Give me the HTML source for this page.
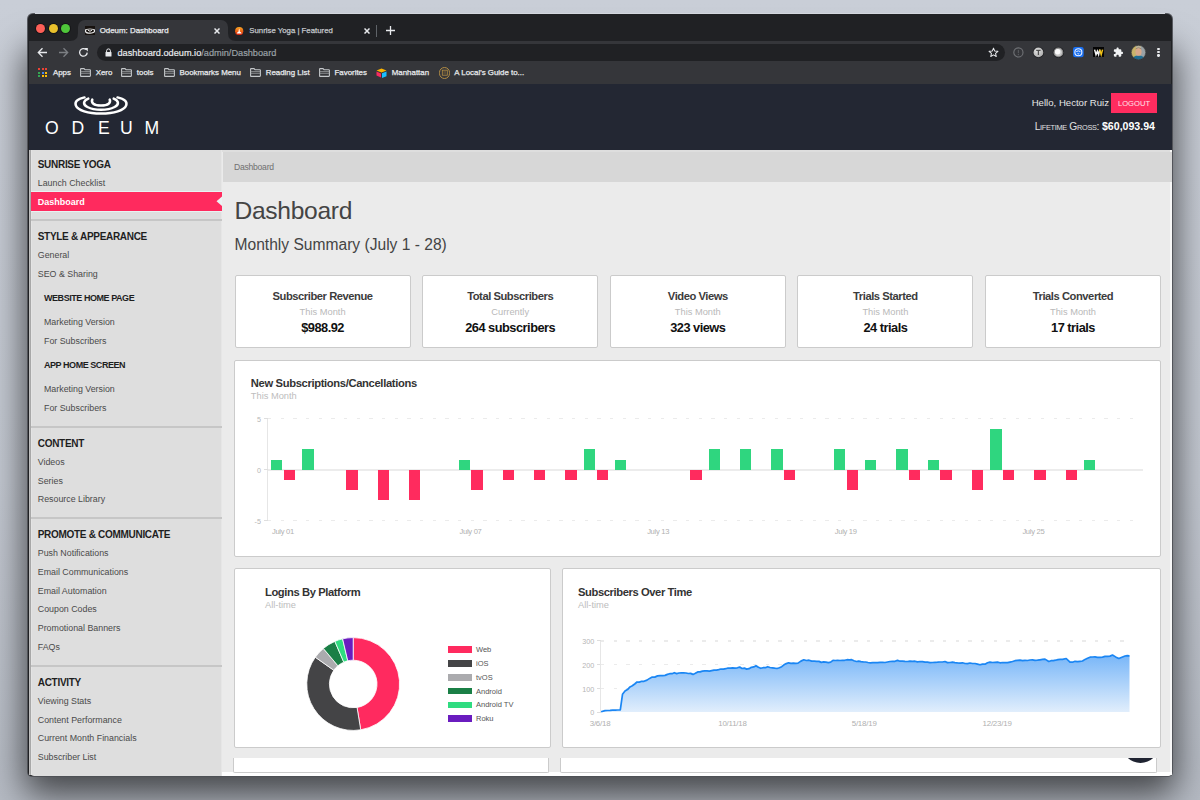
<!DOCTYPE html>
<html><head><meta charset="utf-8"><title>Odeum Dashboard</title>
<style>
html,body{margin:0;padding:0;width:1200px;height:800px;overflow:hidden;}
body{position:relative;font-family:"Liberation Sans", sans-serif;background:#c9cdd6;}
.t{position:absolute;white-space:nowrap;line-height:1;}
svg{position:absolute;}
</style></head><body>
<div style="position:absolute;left:0;top:0;width:1200px;height:800px;background:linear-gradient(180deg,#c9ced7 0%,#c3c8d1 60%,#b5bac3 100%);"></div>
<div style="position:absolute;left:30px;top:40px;width:1140px;height:735px;border-radius:8px;box-shadow:0 14px 34px 6px rgba(0,0,0,0.62);"></div>
<div style="position:absolute;left:28px;top:14px;width:1144px;height:762px;border-radius:5px 5px 4px 4px;background:#202124;box-shadow:0 0 0 1px rgba(78,80,86,0.92);"></div>
<div style="position:absolute;left:35px;top:13px;width:1130px;height:1px;background:#d3d7de;"></div>
<div style="position:absolute;left:36.3px;top:23.8px;width:9px;height:9px;border-radius:50%;background:#fd5f57;box-shadow:0 0 0 1px rgba(0,0,0,0.35);"></div>
<div style="position:absolute;left:48.8px;top:23.8px;width:9px;height:9px;border-radius:50%;background:#e9c02c;box-shadow:0 0 0 1px rgba(0,0,0,0.35);"></div>
<div style="position:absolute;left:61.3px;top:23.8px;width:9px;height:9px;border-radius:50%;background:#4fc63a;box-shadow:0 0 0 1px rgba(0,0,0,0.35);"></div>
<div style="position:absolute;left:78px;top:20px;width:150px;height:22px;background:#35363a;border-radius:7px 7px 0 0;"></div>
<svg style="left:70px;top:33px" width="8" height="8"><path d="M0 8 Q8 8 8 0 L8 8 Z" fill="#35363a"/></svg>
<svg style="left:228px;top:33px" width="8" height="8"><path d="M8 8 Q0 8 0 0 L0 8 Z" fill="#35363a"/></svg>
<svg style="left:85.2px;top:25.7px" width="10" height="9.6" viewBox="0 0 10 9.6"><rect width="10" height="9.6" fill="#17120f"/><ellipse cx="5" cy="4.9" rx="4.6" ry="2.3" stroke="#e8e8e8" stroke-width="1.2" fill="none"/><path d="M3 4.2 Q5 6.4 7 4.2" stroke="#e8e8e8" stroke-width="1" fill="none"/><rect x="0" y="0" width="10" height="3" fill="#17120f"/><path d="M0.9 3.6 Q5 1.6 9.1 3.6" stroke="#bdbdbd" stroke-width="0.6" fill="none"/></svg>
<div class="t" style="left:99.70px;top:27.41px;font-size:7.9px;color:#e8eaed;-webkit-text-stroke:0.25px currentColor;">Odeum: Dashboard</div>
<svg style="left:214.4px;top:27.6px" width="6" height="6"><path d="M0.5 0.5 L5.5 5.5 M5.5 0.5 L0.5 5.5" stroke="#e8eaed" stroke-width="1.5"/></svg>
<svg style="left:235.2px;top:26.6px" width="8.4" height="8.4" viewBox="0 0 8.4 8.4"><defs><linearGradient id="fv2" x1="0" y1="0" x2="0" y2="1"><stop offset="0" stop-color="#f9a825"/><stop offset="0.55" stop-color="#ee5d14"/><stop offset="1" stop-color="#c81a10"/></linearGradient></defs><circle cx="4.2" cy="4.2" r="4.1" fill="url(#fv2)"/><path d="M4.2 1.6 Q4.9 3.4 4.8 4.4 Q6.6 5.2 6.6 6.4 L1.8 6.4 Q1.8 5.2 3.6 4.4 Q3.5 3.4 4.2 1.6 Z" fill="#fff"/></svg>
<div class="t" style="left:249.30px;top:26.90px;font-size:7.8px;color:#c4c7cb;-webkit-text-stroke:0.25px currentColor;">Sunrise Yoga | Featured</div>
<svg style="left:363.7px;top:27.5px" width="6" height="6"><path d="M0.5 0.5 L5.5 5.5 M5.5 0.5 L0.5 5.5" stroke="#e8eaed" stroke-width="1.5"/></svg>
<div style="position:absolute;left:376px;top:24.7px;width:1px;height:12px;background:#5f6368;"></div>
<svg style="left:386px;top:26px" width="9" height="9"><path d="M4.5 0 V9 M0 4.5 H9" stroke="#e8eaed" stroke-width="1.3"/></svg>
<div style="position:absolute;left:29px;top:41px;width:1142px;height:43px;background:#35363a;"></div>
<svg style="left:37px;top:47px" width="11" height="11" viewBox="0 0 11 11"><path d="M10 5.5 H1.5 M5.5 1.3 L1.3 5.5 L5.5 9.7" stroke="#e8eaed" stroke-width="1.3" fill="none"/></svg>
<svg style="left:57.5px;top:47px" width="11" height="11" viewBox="0 0 11 11"><path d="M1 5.5 H9.5 M5.5 1.3 L9.7 5.5 L5.5 9.7" stroke="#7c7f83" stroke-width="1.3" fill="none"/></svg>
<svg style="left:77.5px;top:46.8px" width="11" height="11" viewBox="0 0 11 11"><path d="M9.2 5.6 A3.8 3.8 0 1 1 8 2.6" stroke="#e8eaed" stroke-width="1.3" fill="none"/><path d="M6.3 1 L9.8 1 L9.8 4.5 Z" fill="#e8eaed"/></svg>
<div style="position:absolute;left:96.7px;top:43.8px;width:908px;height:17.2px;background:#202124;border-radius:9px;"></div>
<svg style="left:104.5px;top:47.5px" width="7" height="9" viewBox="0 0 7 9"><path d="M1.6 4 V2.8 A1.9 1.9 0 0 1 5.4 2.8 V4" stroke="#e8eaed" stroke-width="1" fill="none"/><rect x="0.5" y="4" width="6" height="4.6" rx="0.6" fill="#e8eaed"/></svg>
<div class="t" style="left:117.50px;top:49.41px;font-size:9.2px;color:#e8eaed;-webkit-text-stroke:0.2px currentColor;">dashboard.odeum.io<span style="color:#9aa0a6">/admin/Dashboard</span></div>
<svg style="left:987.5px;top:46.6px" width="11" height="11" viewBox="0 0 24 24"><path d="M12 2.5 L14.8 8.9 L21.7 9.5 L16.5 14 L18 20.8 L12 17.3 L6 20.8 L7.5 14 L2.3 9.5 L9.2 8.9 Z" stroke="#e8eaed" stroke-width="2.2" fill="none" stroke-linejoin="round"/></svg>
<svg style="left:1012px;top:46.3px" width="13" height="13" viewBox="0 0 13 13"><circle cx="6.4" cy="6.45" r="4.6" stroke="#707276" stroke-width="1.1" fill="none"/><rect x="5.8" y="3.9" width="1.2" height="3.3" fill="#55575b"/><rect x="5.8" y="8" width="1.2" height="1.2" fill="#55575b"/></svg>
<svg style="left:1032px;top:46.1px" width="13" height="13" viewBox="0 0 13 13"><defs><radialGradient id="g2" cx="0.4" cy="0.35" r="0.7"><stop offset="0" stop-color="#e6e6e6"/><stop offset="1" stop-color="#a9a9a9"/></radialGradient></defs><circle cx="6.4" cy="6.4" r="5.6" fill="#1e1f22"/><circle cx="6.4" cy="6.4" r="4.9" fill="url(#g2)"/><path d="M4.2 4.3 H8.6 M6.4 4.3 V9" stroke="#505050" stroke-width="1.3"/></svg>
<svg style="left:1051.6px;top:46.1px" width="13" height="13" viewBox="0 0 13 13"><circle cx="6.4" cy="6.4" r="5.6" fill="#1e1f22"/><circle cx="6.4" cy="6.4" r="4.9" fill="#8e8e8e"/><circle cx="6.4" cy="6.4" r="3.6" fill="#c9c9c9"/><circle cx="5.7" cy="5.8" r="2.7" fill="#fafafa"/></svg>
<svg style="left:1073px;top:47px" width="11" height="10.5" viewBox="0 0 11 10.5"><rect x="0" y="0" width="10.7" height="10.3" rx="2.2" fill="#1a6ff0"/><circle cx="5.35" cy="5.2" r="3.5" stroke="#e9f1ff" stroke-width="1.1" fill="none"/><path d="M3.3 4.6 Q5.35 3.2 7.4 4.6 M4.5 6.4 Q5.35 7.4 6.2 6.4" stroke="#e9f1ff" stroke-width="1" fill="none"/></svg>
<svg style="left:1093px;top:47.3px" width="11" height="10" viewBox="0 0 11 10"><rect width="11" height="10" fill="#050505"/><path d="M1.6 2.6 L3 7.6 L4.4 4.2 L5.6 7.6 L6.8 2.6" stroke="#f4f4f4" stroke-width="1.5" fill="none"/><path d="M6.8 2.6 L8.2 7.6 L9.6 2.6" stroke="#f2c318" stroke-width="1.5" fill="none"/></svg>
<svg style="left:1113.4px;top:47.2px" width="10.5" height="10.5" viewBox="0 0 24 24"><path d="M20.5 11H19V7c0-1.1-.9-2-2-2h-4V3.5C13 2.12 11.88 1 10.5 1S8 2.12 8 3.5V5H4c-1.1 0-1.99.9-1.99 2v3.8H3.5c1.49 0 2.7 1.21 2.7 2.7s-1.21 2.7-2.7 2.7H2V20c0 1.1.9 2 2 2h3.8v-1.5c0-1.49 1.21-2.7 2.7-2.7 1.49 0 2.7 1.21 2.7 2.7V22H17c1.1 0 2-.9 2-2v-4h1.5c1.38 0 2.5-1.12 2.5-2.5S21.88 11 20.5 11z" fill="#f1f3f4"/></svg>
<svg style="left:1130.8px;top:44.8px" width="15" height="15" viewBox="0 0 15 15"><defs><clipPath id="av"><circle cx="7.5" cy="7.5" r="7.2"/></clipPath></defs><g clip-path="url(#av)"><rect width="15" height="15" fill="#b9b39a"/><rect x="0" y="0" width="5" height="15" fill="#c9b46a"/><rect x="10" y="0" width="5" height="15" fill="#9aa2a6"/><path d="M1 15 Q1.5 10.5 7.5 10.5 Q13.5 10.5 14 15 Z" fill="#1f6d93"/><ellipse cx="7.5" cy="6.8" rx="3.1" ry="3.9" fill="#d9a88a"/><path d="M4.6 4.6 Q7.5 1.6 10.4 4.6 L10.2 3.4 Q7.5 1.4 4.8 3.4 Z" fill="#8c7a66"/></g><circle cx="7.5" cy="7.5" r="7.2" stroke="#2a2b2e" stroke-width="0.6" fill="none"/></svg>
<div style="position:absolute;left:1157.25px;top:47.650000000000006px;width:2.3px;height:2.3px;border-radius:50%;background:#e8eaed;"></div>
<div style="position:absolute;left:1157.25px;top:51.050000000000004px;width:2.3px;height:2.3px;border-radius:50%;background:#e8eaed;"></div>
<div style="position:absolute;left:1157.25px;top:54.45px;width:2.3px;height:2.3px;border-radius:50%;background:#e8eaed;"></div>
<div style="position:absolute;left:38.2px;top:68.2px;width:2px;height:2px;background:#ea4335;"></div>
<div style="position:absolute;left:41.6px;top:68.2px;width:2px;height:2px;background:#ea4335;"></div>
<div style="position:absolute;left:45.0px;top:68.2px;width:2px;height:2px;background:#ea4335;"></div>
<div style="position:absolute;left:38.2px;top:71.60000000000001px;width:2px;height:2px;background:#34a853;"></div>
<div style="position:absolute;left:41.6px;top:71.60000000000001px;width:2px;height:2px;background:#4285f4;"></div>
<div style="position:absolute;left:45.0px;top:71.60000000000001px;width:2px;height:2px;background:#fbbc05;"></div>
<div style="position:absolute;left:38.2px;top:75.0px;width:2px;height:2px;background:#34a853;"></div>
<div style="position:absolute;left:41.6px;top:75.0px;width:2px;height:2px;background:#fbbc05;"></div>
<div style="position:absolute;left:45.0px;top:75.0px;width:2px;height:2px;background:#fbbc05;"></div>
<div class="t" style="left:52.90px;top:69.41px;font-size:7.9px;color:#e8eaed;-webkit-text-stroke:0.25px currentColor;">Apps</div>
<svg style="left:79.9px;top:68px" width="11" height="9" viewBox="0 0 11 9"><path d="M0.6 1.2 Q0.6 0.6 1.2 0.6 H4 L5 1.7 H9.8 Q10.4 1.7 10.4 2.3 V7.8 Q10.4 8.4 9.8 8.4 H1.2 Q0.6 8.4 0.6 7.8 Z" stroke="#c4c7ca" stroke-width="1.1" fill="none"/><path d="M0.8 3.6 H10.2 M0.8 5.3 H10.2" stroke="#9ea1a5" stroke-width="0.8"/></svg>
<div class="t" style="left:95.70px;top:69.41px;font-size:7.9px;color:#e8eaed;-webkit-text-stroke:0.25px currentColor;">Xero</div>
<svg style="left:121.4px;top:68px" width="11" height="9" viewBox="0 0 11 9"><path d="M0.6 1.2 Q0.6 0.6 1.2 0.6 H4 L5 1.7 H9.8 Q10.4 1.7 10.4 2.3 V7.8 Q10.4 8.4 9.8 8.4 H1.2 Q0.6 8.4 0.6 7.8 Z" stroke="#c4c7ca" stroke-width="1.1" fill="none"/><path d="M0.8 3.6 H10.2 M0.8 5.3 H10.2" stroke="#9ea1a5" stroke-width="0.8"/></svg>
<div class="t" style="left:136.80px;top:69.41px;font-size:7.9px;color:#e8eaed;-webkit-text-stroke:0.25px currentColor;">tools</div>
<svg style="left:163.6px;top:68px" width="11" height="9" viewBox="0 0 11 9"><path d="M0.6 1.2 Q0.6 0.6 1.2 0.6 H4 L5 1.7 H9.8 Q10.4 1.7 10.4 2.3 V7.8 Q10.4 8.4 9.8 8.4 H1.2 Q0.6 8.4 0.6 7.8 Z" stroke="#c4c7ca" stroke-width="1.1" fill="none"/><path d="M0.8 3.6 H10.2 M0.8 5.3 H10.2" stroke="#9ea1a5" stroke-width="0.8"/></svg>
<div class="t" style="left:179.50px;top:69.41px;font-size:7.9px;color:#e8eaed;-webkit-text-stroke:0.25px currentColor;">Bookmarks Menu</div>
<svg style="left:250px;top:68px" width="11" height="9" viewBox="0 0 11 9"><path d="M0.6 1.2 Q0.6 0.6 1.2 0.6 H4 L5 1.7 H9.8 Q10.4 1.7 10.4 2.3 V7.8 Q10.4 8.4 9.8 8.4 H1.2 Q0.6 8.4 0.6 7.8 Z" stroke="#c4c7ca" stroke-width="1.1" fill="none"/><path d="M0.8 3.6 H10.2 M0.8 5.3 H10.2" stroke="#9ea1a5" stroke-width="0.8"/></svg>
<div class="t" style="left:265.75px;top:69.41px;font-size:7.9px;color:#e8eaed;-webkit-text-stroke:0.25px currentColor;">Reading List</div>
<svg style="left:319.25px;top:68px" width="11" height="9" viewBox="0 0 11 9"><path d="M0.6 1.2 Q0.6 0.6 1.2 0.6 H4 L5 1.7 H9.8 Q10.4 1.7 10.4 2.3 V7.8 Q10.4 8.4 9.8 8.4 H1.2 Q0.6 8.4 0.6 7.8 Z" stroke="#c4c7ca" stroke-width="1.1" fill="none"/><path d="M0.8 3.6 H10.2 M0.8 5.3 H10.2" stroke="#9ea1a5" stroke-width="0.8"/></svg>
<div class="t" style="left:334.50px;top:69.41px;font-size:7.9px;color:#e8eaed;-webkit-text-stroke:0.25px currentColor;">Favorites</div>
<svg style="left:376.3px;top:67.5px" width="11" height="10" viewBox="0 0 11 10"><path d="M5.5 0.5 L10.5 2.5 L5.5 4.5 L0.5 2.5 Z" fill="#fcb400"/><path d="M6 5.3 L10.5 3.5 V8.3 L6 10 Z" fill="#18bfff"/><path d="M0.5 3.5 L5 5.4 V9.6 L0.5 7.6 Z" fill="#f82b60"/></svg>
<div class="t" style="left:391.75px;top:69.41px;font-size:7.9px;color:#e8eaed;-webkit-text-stroke:0.25px currentColor;">Manhattan</div>
<div style="position:absolute;left:438.8px;top:67px;width:9.5px;height:9.5px;border-radius:50%;border:1px solid #b28c44;"></div>
<svg style="left:438.8px;top:67px" width="11.5" height="11.5" viewBox="0 0 11.5 11.5"><rect x="3.3" y="3.2" width="5" height="5" stroke="#b28c44" stroke-width="0.8" fill="none"/><path d="M4.4 4.6 H7.2 M4.4 5.7 H7.2 M4.4 6.8 H7.2" stroke="#8a6c34" stroke-width="0.5"/></svg>
<div class="t" style="left:454.25px;top:69.41px;font-size:7.9px;color:#e8eaed;-webkit-text-stroke:0.25px currentColor;">A Local&#39;s Guide to...</div>
<div style="position:absolute;left:29px;top:83.5px;width:1143px;height:66.5px;background:#232733;"></div>
<svg style="left:70px;top:92px" width="62" height="26" viewBox="0 0 62 26">
<path d="M14.5 5.4 C7.2 7 4.6 10 5.8 13.4 C7.6 18.4 18 21.6 31 21.6 C44 21.6 54.4 18.4 56.2 13.4 C57.4 10 54.8 7 47.5 5.4" stroke="#fff" stroke-width="2.5" fill="none" stroke-linecap="round"/>
<path d="M18.3 6.6 C12.8 8.8 12.8 12.6 17.4 15 C21 16.9 26 17.8 31 17.8 C36 17.8 41 16.9 44.6 15 C49.2 12.6 49.2 8.8 43.7 6.6" stroke="#fff" stroke-width="2.5" fill="none" stroke-linecap="round"/>
<path d="M22.3 7.6 C21 10.6 23.5 13.6 31 13.6 C38.5 13.6 41 10.6 39.7 7.6" stroke="#fff" stroke-width="2.5" fill="none" stroke-linecap="round"/>
</svg>
<div class="t" style="left:44.90px;top:120.00px;font-size:17.6px;color:#fff;font-weight:normal;">O</div>
<div class="t" style="left:71.40px;top:120.00px;font-size:17.6px;color:#fff;font-weight:normal;">D</div>
<div class="t" style="left:98.00px;top:120.00px;font-size:17.6px;color:#fff;font-weight:normal;">E</div>
<div class="t" style="left:120.00px;top:120.00px;font-size:17.6px;color:#fff;font-weight:normal;">U</div>
<div class="t" style="left:144.50px;top:120.00px;font-size:17.6px;color:#fff;font-weight:normal;">M</div>
<div class="t" style="right:91.00px;top:97.97px;font-size:9.6px;color:#e6e6e6;">Hello, Hector Ruiz</div>
<div style="position:absolute;left:1111.1px;top:93.3px;width:45.8px;height:19.8px;background:#ff2c5f;"></div>
<div class="t" style="left:834.00px;width:600px;text-align:center;top:100.37px;font-size:7.6px;color:#ffe3ea;">LOGOUT</div>
<div class="t" style="right:45.00px;top:120.88px;font-size:10.3px;color:#e0e0e0;"><span style="letter-spacing:-0.3px">L<span style="font-size:7.3px">IFETIME</span> G<span style="font-size:7.3px">ROSS</span>:</span> <b style="color:#fff;font-size:10.6px;letter-spacing:0px">$60,093.94</b></div>
<div style="position:absolute;left:29px;top:150px;width:193px;height:626px;background:#dedede;border-radius:0 0 0 5px;"></div>
<div style="position:absolute;left:28.6px;top:150px;width:1px;height:625px;background:#bdbdbd;"></div>
<div style="position:absolute;left:29.6px;top:150px;width:1.2px;height:625px;background:#a8a8a8;"></div>
<div style="position:absolute;left:30.8px;top:150px;width:1.4px;height:625px;background:#e4e4e4;"></div>
<div style="position:absolute;left:221px;top:150px;width:1px;height:626px;background:#e6e6e6;"></div>
<div class="t" style="left:37.75px;top:159.94px;font-size:10px;color:#1e1e1e;font-weight:bold;letter-spacing:-0.3px;">SUNRISE YOGA</div>
<div class="t" style="left:37.75px;top:178.81px;font-size:8.85px;color:#4a4a4a;">Launch Checklist</div>
<div style="position:absolute;left:30.5px;top:191px;width:191.5px;height:1px;background:#e9f2f2;"></div>
<div style="position:absolute;left:30.5px;top:192px;width:191.5px;height:18.5px;background:#ff2a5e;"></div>
<div style="position:absolute;left:30.5px;top:210.5px;width:191.5px;height:1px;background:#e9f2f2;"></div>
<svg style="left:216px;top:192px" width="6" height="18.5" viewBox="0 0 6 18.5"><path d="M6 4.5 L0.5 9.25 L6 14 Z" fill="#ebf3f3"/></svg>
<div class="t" style="left:37.75px;top:197.68px;font-size:9px;color:#fff;font-weight:bold;">Dashboard</div>
<div style="position:absolute;left:30.5px;top:219.3px;width:191.5px;height:2px;background:#c6c6c6;"></div>
<div class="t" style="left:37.75px;top:232.19px;font-size:10px;color:#1e1e1e;font-weight:bold;letter-spacing:-0.3px;">STYLE &amp; APPEARANCE</div>
<div class="t" style="left:37.75px;top:250.91px;font-size:8.85px;color:#4a4a4a;">General</div>
<div class="t" style="left:37.75px;top:269.91px;font-size:8.85px;color:#4a4a4a;">SEO &amp; Sharing</div>
<div class="t" style="left:44.00px;top:294.18px;font-size:9px;color:#1e1e1e;font-weight:bold;letter-spacing:-0.45px;">WEBSITE HOME PAGE</div>
<div class="t" style="left:44.00px;top:318.41px;font-size:8.85px;color:#4a4a4a;">Marketing Version</div>
<div class="t" style="left:44.00px;top:336.91px;font-size:8.85px;color:#4a4a4a;">For Subscribers</div>
<div class="t" style="left:44.00px;top:361.38px;font-size:9px;color:#1e1e1e;font-weight:bold;letter-spacing:-0.45px;">APP HOME SCREEN</div>
<div class="t" style="left:44.00px;top:385.31px;font-size:8.85px;color:#4a4a4a;">Marketing Version</div>
<div class="t" style="left:44.00px;top:404.01px;font-size:8.85px;color:#4a4a4a;">For Subscribers</div>
<div style="position:absolute;left:30.5px;top:426px;width:191.5px;height:2px;background:#c6c6c6;"></div>
<div class="t" style="left:37.75px;top:439.04px;font-size:10px;color:#1e1e1e;font-weight:bold;letter-spacing:-0.3px;">CONTENT</div>
<div class="t" style="left:37.75px;top:457.81px;font-size:8.85px;color:#4a4a4a;">Videos</div>
<div class="t" style="left:37.75px;top:476.51px;font-size:8.85px;color:#4a4a4a;">Series</div>
<div class="t" style="left:37.75px;top:495.31px;font-size:8.85px;color:#4a4a4a;">Resource Library</div>
<div style="position:absolute;left:30.5px;top:517px;width:191.5px;height:2px;background:#c6c6c6;"></div>
<div class="t" style="left:37.75px;top:530.43px;font-size:10px;color:#1e1e1e;font-weight:bold;letter-spacing:-0.3px;">PROMOTE &amp; COMMUNICATE</div>
<div class="t" style="left:37.75px;top:549.01px;font-size:8.85px;color:#4a4a4a;">Push Notifications</div>
<div class="t" style="left:37.75px;top:567.83px;font-size:8.85px;color:#4a4a4a;">Email Communications</div>
<div class="t" style="left:37.75px;top:586.65px;font-size:8.85px;color:#4a4a4a;">Email Automation</div>
<div class="t" style="left:37.75px;top:605.47px;font-size:8.85px;color:#4a4a4a;">Coupon Codes</div>
<div class="t" style="left:37.75px;top:624.29px;font-size:8.85px;color:#4a4a4a;">Promotional Banners</div>
<div class="t" style="left:37.75px;top:643.11px;font-size:8.85px;color:#4a4a4a;">FAQs</div>
<div style="position:absolute;left:30.5px;top:665.2px;width:191.5px;height:2px;background:#c6c6c6;"></div>
<div class="t" style="left:37.75px;top:678.13px;font-size:10px;color:#1e1e1e;font-weight:bold;letter-spacing:-0.3px;">ACTIVITY</div>
<div class="t" style="left:37.75px;top:697.11px;font-size:8.85px;color:#4a4a4a;">Viewing Stats</div>
<div class="t" style="left:37.75px;top:715.78px;font-size:8.85px;color:#4a4a4a;">Content Performance</div>
<div class="t" style="left:37.75px;top:734.45px;font-size:8.85px;color:#4a4a4a;">Current Month Financials</div>
<div class="t" style="left:37.75px;top:753.12px;font-size:8.85px;color:#4a4a4a;">Subscriber List</div>
<div style="position:absolute;left:222px;top:150px;width:950px;height:626px;background:#ebebeb;border-radius:0 0 5px 0;"></div>
<div style="position:absolute;left:222px;top:150px;width:950px;height:2px;background:#dedede;"></div>
<div style="position:absolute;left:1170px;top:150px;width:2px;height:625px;background:#f8f8f8;"></div>
<div style="position:absolute;left:223px;top:152px;width:949px;height:29.5px;background:#d7d7d7;"></div>
<div class="t" style="left:234.00px;top:162.92px;font-size:8.6px;color:#707070;letter-spacing:-0.25px;">Dashboard</div>
<div class="t" style="left:234.50px;top:198.68px;font-size:24.6px;color:#444;letter-spacing:-0.3px;">Dashboard</div>
<div class="t" style="left:234.50px;top:236.79px;font-size:15.6px;color:#444;">Monthly Summary (July 1 - 28)</div>
<div style="position:absolute;left:234.5px;top:275.3px;width:176.2px;height:72.5px;box-sizing:border-box;background:#fff;border:1px solid #cbcbcb;border-radius:2px;"></div>
<div class="t" style="left:22.60px;width:600px;text-align:center;top:291.02px;font-size:11.2px;color:#3c3c3c;font-weight:bold;letter-spacing:-0.45px;">Subscriber Revenue</div>
<div class="t" style="left:22.60px;width:600px;text-align:center;top:307.93px;font-size:9.3px;color:#b9b9b9;">This Month</div>
<div class="t" style="left:22.60px;width:600px;text-align:center;top:322.06px;font-size:12.8px;color:#111;font-weight:bold;letter-spacing:-0.5px;">$988.92</div>
<div style="position:absolute;left:422.1px;top:275.3px;width:176.19999999999993px;height:72.5px;box-sizing:border-box;background:#fff;border:1px solid #cbcbcb;border-radius:2px;"></div>
<div class="t" style="left:210.20px;width:600px;text-align:center;top:291.02px;font-size:11.2px;color:#3c3c3c;font-weight:bold;letter-spacing:-0.45px;">Total Subscribers</div>
<div class="t" style="left:210.20px;width:600px;text-align:center;top:307.93px;font-size:9.3px;color:#b9b9b9;">Currently</div>
<div class="t" style="left:210.20px;width:600px;text-align:center;top:322.06px;font-size:12.8px;color:#111;font-weight:bold;letter-spacing:-0.5px;">264 subscribers</div>
<div style="position:absolute;left:609.7px;top:275.3px;width:176.20000000000005px;height:72.5px;box-sizing:border-box;background:#fff;border:1px solid #cbcbcb;border-radius:2px;"></div>
<div class="t" style="left:397.80px;width:600px;text-align:center;top:291.02px;font-size:11.2px;color:#3c3c3c;font-weight:bold;letter-spacing:-0.45px;">Video Views</div>
<div class="t" style="left:397.80px;width:600px;text-align:center;top:307.93px;font-size:9.3px;color:#b9b9b9;">This Month</div>
<div class="t" style="left:397.80px;width:600px;text-align:center;top:322.06px;font-size:12.8px;color:#111;font-weight:bold;letter-spacing:-0.5px;">323 views</div>
<div style="position:absolute;left:797.3px;top:275.3px;width:176.20000000000005px;height:72.5px;box-sizing:border-box;background:#fff;border:1px solid #cbcbcb;border-radius:2px;"></div>
<div class="t" style="left:585.40px;width:600px;text-align:center;top:291.02px;font-size:11.2px;color:#3c3c3c;font-weight:bold;letter-spacing:-0.45px;">Trials Started</div>
<div class="t" style="left:585.40px;width:600px;text-align:center;top:307.93px;font-size:9.3px;color:#b9b9b9;">This Month</div>
<div class="t" style="left:585.40px;width:600px;text-align:center;top:322.06px;font-size:12.8px;color:#111;font-weight:bold;letter-spacing:-0.5px;">24 trials</div>
<div style="position:absolute;left:984.9px;top:275.3px;width:176.19999999999993px;height:72.5px;box-sizing:border-box;background:#fff;border:1px solid #cbcbcb;border-radius:2px;"></div>
<div class="t" style="left:773.00px;width:600px;text-align:center;top:291.02px;font-size:11.2px;color:#3c3c3c;font-weight:bold;letter-spacing:-0.45px;">Trials Converted</div>
<div class="t" style="left:773.00px;width:600px;text-align:center;top:307.93px;font-size:9.3px;color:#b9b9b9;">This Month</div>
<div class="t" style="left:773.00px;width:600px;text-align:center;top:322.06px;font-size:12.8px;color:#111;font-weight:bold;letter-spacing:-0.5px;">17 trials</div>
<div style="position:absolute;left:234.3px;top:359.5px;width:926.7px;height:197.0px;box-sizing:border-box;background:#fff;border:1px solid #cbcbcb;border-radius:2px;"></div>
<div class="t" style="left:250.80px;top:378.12px;font-size:11.2px;color:#333;font-weight:bold;letter-spacing:-0.34px;">New Subscriptions/Cancellations</div>
<div class="t" style="left:250.80px;top:391.73px;font-size:9.3px;color:#bdbdbd;">This Month</div>
<div style="position:absolute;left:267.5px;top:418.04999999999995px;width:870.5px;height:1.2px;background:repeating-linear-gradient(90deg,#ebebeb 0 3.3px,transparent 3.3px 12.669999999999998px);"></div>
<div style="position:absolute;left:267.5px;top:520.25px;width:870.5px;height:1.2px;background:repeating-linear-gradient(90deg,#ebebeb 0 3.3px,transparent 3.3px 12.669999999999998px);"></div>
<div style="position:absolute;left:267.0px;top:418.65px;width:1px;height:102.2px;background:#e6e6e6;"></div>
<div style="position:absolute;left:267.5px;top:468.75px;width:875.5px;height:2px;background:#ececec;"></div>
<div style="position:absolute;left:263.5px;top:418.15px;width:4px;height:1px;background:#dedede;"></div>
<div class="t" style="right:939.00px;top:416.06px;font-size:7.2px;color:#b5b5b5;">5</div>
<div style="position:absolute;left:263.5px;top:469.25px;width:4px;height:1px;background:#dedede;"></div>
<div class="t" style="right:939.00px;top:467.16px;font-size:7.2px;color:#b5b5b5;">0</div>
<div style="position:absolute;left:263.5px;top:520.35px;width:4px;height:1px;background:#dedede;"></div>
<div class="t" style="right:939.00px;top:518.26px;font-size:7.2px;color:#b5b5b5;">-5</div>
<div style="position:absolute;left:271.00px;top:459.53px;width:11.3px;height:10.22px;background:#2fd67f;"></div>
<div style="position:absolute;left:302.27px;top:449.31px;width:11.3px;height:20.44px;background:#2fd67f;"></div>
<div style="position:absolute;left:458.62px;top:459.53px;width:11.3px;height:10.22px;background:#2fd67f;"></div>
<div style="position:absolute;left:583.70px;top:449.31px;width:11.3px;height:20.44px;background:#2fd67f;"></div>
<div style="position:absolute;left:614.97px;top:459.53px;width:11.3px;height:10.22px;background:#2fd67f;"></div>
<div style="position:absolute;left:708.78px;top:449.31px;width:11.3px;height:20.44px;background:#2fd67f;"></div>
<div style="position:absolute;left:740.05px;top:449.31px;width:11.3px;height:20.44px;background:#2fd67f;"></div>
<div style="position:absolute;left:771.32px;top:449.31px;width:11.3px;height:20.44px;background:#2fd67f;"></div>
<div style="position:absolute;left:833.86px;top:449.31px;width:11.3px;height:20.44px;background:#2fd67f;"></div>
<div style="position:absolute;left:865.13px;top:459.53px;width:11.3px;height:10.22px;background:#2fd67f;"></div>
<div style="position:absolute;left:896.40px;top:449.31px;width:11.3px;height:20.44px;background:#2fd67f;"></div>
<div style="position:absolute;left:927.67px;top:459.53px;width:11.3px;height:10.22px;background:#2fd67f;"></div>
<div style="position:absolute;left:990.21px;top:428.87px;width:11.3px;height:40.88px;background:#2fd67f;"></div>
<div style="position:absolute;left:1084.02px;top:459.53px;width:11.3px;height:10.22px;background:#2fd67f;"></div>
<div style="position:absolute;left:283.80px;top:469.75px;width:11.3px;height:10.22px;background:#ff2b5e;"></div>
<div style="position:absolute;left:346.34px;top:469.75px;width:11.3px;height:20.44px;background:#ff2b5e;"></div>
<div style="position:absolute;left:377.61px;top:469.75px;width:11.3px;height:30.66px;background:#ff2b5e;"></div>
<div style="position:absolute;left:408.88px;top:469.75px;width:11.3px;height:30.66px;background:#ff2b5e;"></div>
<div style="position:absolute;left:471.42px;top:469.75px;width:11.3px;height:20.44px;background:#ff2b5e;"></div>
<div style="position:absolute;left:502.69px;top:469.75px;width:11.3px;height:10.22px;background:#ff2b5e;"></div>
<div style="position:absolute;left:533.96px;top:469.75px;width:11.3px;height:10.22px;background:#ff2b5e;"></div>
<div style="position:absolute;left:565.23px;top:469.75px;width:11.3px;height:10.22px;background:#ff2b5e;"></div>
<div style="position:absolute;left:596.50px;top:469.75px;width:11.3px;height:10.22px;background:#ff2b5e;"></div>
<div style="position:absolute;left:690.31px;top:469.75px;width:11.3px;height:10.22px;background:#ff2b5e;"></div>
<div style="position:absolute;left:784.12px;top:469.75px;width:11.3px;height:10.22px;background:#ff2b5e;"></div>
<div style="position:absolute;left:846.66px;top:469.75px;width:11.3px;height:20.44px;background:#ff2b5e;"></div>
<div style="position:absolute;left:909.20px;top:469.75px;width:11.3px;height:10.22px;background:#ff2b5e;"></div>
<div style="position:absolute;left:940.47px;top:469.75px;width:11.3px;height:10.22px;background:#ff2b5e;"></div>
<div style="position:absolute;left:971.74px;top:469.75px;width:11.3px;height:20.44px;background:#ff2b5e;"></div>
<div style="position:absolute;left:1003.01px;top:469.75px;width:11.3px;height:10.22px;background:#ff2b5e;"></div>
<div style="position:absolute;left:1034.28px;top:469.75px;width:11.3px;height:10.22px;background:#ff2b5e;"></div>
<div style="position:absolute;left:1065.55px;top:469.75px;width:11.3px;height:10.22px;background:#ff2b5e;"></div>
<div class="t" style="left:271.90px;top:528.07px;font-size:7.6px;color:#b0b0b0;letter-spacing:-0.3px;">July 01</div>
<div class="t" style="left:459.52px;top:528.07px;font-size:7.6px;color:#b0b0b0;letter-spacing:-0.3px;">July 07</div>
<div class="t" style="left:647.14px;top:528.07px;font-size:7.6px;color:#b0b0b0;letter-spacing:-0.3px;">July 13</div>
<div class="t" style="left:834.76px;top:528.07px;font-size:7.6px;color:#b0b0b0;letter-spacing:-0.3px;">July 19</div>
<div class="t" style="left:1022.38px;top:528.07px;font-size:7.6px;color:#b0b0b0;letter-spacing:-0.3px;">July 25</div>
<div style="position:absolute;left:234.4px;top:568.1px;width:316.30000000000007px;height:179.89999999999998px;box-sizing:border-box;background:#fff;border:1px solid #cbcbcb;border-radius:2px;"></div>
<div class="t" style="left:265.00px;top:587.22px;font-size:11.2px;color:#333;font-weight:bold;letter-spacing:-0.4px;">Logins By Platform</div>
<div class="t" style="left:265.00px;top:600.53px;font-size:9.3px;color:#bdbdbd;">All-time</div>
<svg style="left:0;top:0" width="1200" height="800"><path d="M353.20 637.60 A46.4 46.4 0 0 1 360.70 729.79 L357.05 707.49 A23.8 23.8 0 0 0 353.20 660.20 Z" fill="#ff2a5f" stroke="#fff" stroke-width="0.8"/><path d="M360.70 729.79 A46.4 46.4 0 0 1 315.31 657.22 L333.76 670.26 A23.8 23.8 0 0 0 357.05 707.49 Z" fill="#444446" stroke="#fff" stroke-width="0.8"/><path d="M315.31 657.22 A46.4 46.4 0 0 1 323.37 648.46 L337.90 665.77 A23.8 23.8 0 0 0 333.76 670.26 Z" fill="#ababae" stroke="#fff" stroke-width="0.8"/><path d="M323.37 648.46 A46.4 46.4 0 0 1 334.85 641.38 L343.79 662.14 A23.8 23.8 0 0 0 337.90 665.77 Z" fill="#1a7f46" stroke="#fff" stroke-width="0.8"/><path d="M334.85 641.38 A46.4 46.4 0 0 1 342.60 638.83 L347.77 660.83 A23.8 23.8 0 0 0 343.79 662.14 Z" fill="#2fdc80" stroke="#fff" stroke-width="0.8"/><path d="M342.60 638.83 A46.4 46.4 0 0 1 353.20 637.60 L353.20 660.20 A23.8 23.8 0 0 0 347.77 660.83 Z" fill="#6a1cbf" stroke="#fff" stroke-width="0.8"/></svg>
<div style="position:absolute;left:447.6px;top:646.40px;width:24.4px;height:6.5px;background:#ff2a5f;"></div>
<div class="t" style="left:476.00px;top:646.15px;font-size:7.5px;color:#555;">Web</div>
<div style="position:absolute;left:447.6px;top:660.20px;width:24.4px;height:6.5px;background:#444446;"></div>
<div class="t" style="left:476.00px;top:659.95px;font-size:7.5px;color:#555;">iOS</div>
<div style="position:absolute;left:447.6px;top:674.00px;width:24.4px;height:6.5px;background:#ababae;"></div>
<div class="t" style="left:476.00px;top:673.75px;font-size:7.5px;color:#555;">tvOS</div>
<div style="position:absolute;left:447.6px;top:687.80px;width:24.4px;height:6.5px;background:#1a7f46;"></div>
<div class="t" style="left:476.00px;top:687.55px;font-size:7.5px;color:#555;">Android</div>
<div style="position:absolute;left:447.6px;top:701.60px;width:24.4px;height:6.5px;background:#2fdc80;"></div>
<div class="t" style="left:476.00px;top:701.35px;font-size:7.5px;color:#555;">Android TV</div>
<div style="position:absolute;left:447.6px;top:715.40px;width:24.4px;height:6.5px;background:#6a1cbf;"></div>
<div class="t" style="left:476.00px;top:715.15px;font-size:7.5px;color:#555;">Roku</div>
<div style="position:absolute;left:561.8px;top:568.1px;width:599.2px;height:179.89999999999998px;box-sizing:border-box;background:#fff;border:1px solid #cbcbcb;border-radius:2px;"></div>
<div class="t" style="left:578.00px;top:587.22px;font-size:11.2px;color:#333;font-weight:bold;letter-spacing:-0.4px;">Subscribers Over Time</div>
<div class="t" style="left:578.00px;top:600.53px;font-size:9.3px;color:#bdbdbd;">All-time</div>
<div class="t" style="right:605.70px;top:638.40px;font-size:7.2px;color:#b5b5b5;">300</div>
<div style="position:absolute;left:596.8px;top:640.49px;width:4px;height:1px;background:#dedede;"></div>
<div style="position:absolute;left:600.8px;top:640.39px;width:530.2px;height:1.2px;background:repeating-linear-gradient(90deg,#ebebeb 0 3.3px,transparent 3.3px 12.669999999999998px);"></div>
<div class="t" style="right:605.70px;top:662.07px;font-size:7.2px;color:#b5b5b5;">200</div>
<div style="position:absolute;left:596.8px;top:664.16px;width:4px;height:1px;background:#dedede;"></div>
<div style="position:absolute;left:600.8px;top:664.06px;width:530.2px;height:1.2px;background:repeating-linear-gradient(90deg,#ebebeb 0 3.3px,transparent 3.3px 12.669999999999998px);"></div>
<div class="t" style="right:605.70px;top:685.74px;font-size:7.2px;color:#b5b5b5;">100</div>
<div style="position:absolute;left:596.8px;top:687.83px;width:4px;height:1px;background:#dedede;"></div>
<div style="position:absolute;left:600.8px;top:687.73px;width:530.2px;height:1.2px;background:repeating-linear-gradient(90deg,#ebebeb 0 3.3px,transparent 3.3px 12.669999999999998px);"></div>
<div class="t" style="right:605.70px;top:709.41px;font-size:7.2px;color:#b5b5b5;">0</div>
<div style="position:absolute;left:596.8px;top:711.5px;width:4px;height:1px;background:#dedede;"></div>
<div style="position:absolute;left:600.3px;top:640.99px;width:1px;height:71.01px;background:#e6e6e6;"></div>
<svg style="left:0;top:0" width="1200" height="800"><defs><linearGradient id="ag" x1="0" y1="655" x2="0" y2="712" gradientUnits="userSpaceOnUse"><stop offset="0" stop-color="#78b6f8"/><stop offset="1" stop-color="#e1eefc"/></linearGradient></defs>
<path d="M600.8,712.0 L601.1,711.8 L605.0,710.6 L607.5,710.5 L610.1,710.4 L612.6,710.2 L615.2,710.1 L617.8,710.0 L620.3,709.9 L622.5,694.3 L625.0,691.1 L627.5,689.6 L630.0,686.9 L632.3,685.8 L634.7,684.0 L637.0,682.0 L639.3,682.1 L641.7,681.3 L644.0,681.3 L647.0,680.1 L649.6,678.4 L652.2,677.1 L654.8,677.1 L657.5,675.9 L660.1,675.6 L662.7,675.6 L665.0,675.4 L667.4,674.4 L669.7,673.7 L672.0,673.7 L674.3,672.7 L676.7,673.6 L679.0,673.0 L681.3,672.8 L683.6,672.8 L686.0,673.0 L688.3,673.5 L690.6,673.4 L693.0,674.4 L695.4,673.3 L697.7,671.9 L700.0,671.9 L702.4,671.1 L704.7,670.9 L707.0,670.9 L709.4,671.2 L711.7,670.7 L714.0,670.2 L716.4,670.1 L718.7,669.6 L721.0,669.0 L723.4,669.2 L725.7,668.7 L728.0,668.0 L730.4,668.2 L732.7,667.9 L735.0,668.1 L737.4,667.8 L739.7,667.1 L742.0,668.5 L744.4,668.1 L746.7,669.1 L749.0,668.7 L751.4,667.3 L753.7,666.9 L756.0,665.7 L758.4,667.3 L760.7,668.3 L763.0,667.7 L765.4,667.7 L767.7,666.7 L770.0,667.5 L772.4,667.8 L774.7,668.2 L777.0,668.5 L779.4,667.7 L781.7,666.7 L784.0,664.8 L786.3,663.6 L788.6,662.8 L791.0,663.3 L793.3,663.1 L795.7,663.4 L798.0,663.1 L800.9,661.1 L803.8,659.8 L806.4,660.5 L809.0,660.2 L811.7,661.1 L814.3,661.1 L816.6,661.3 L819.0,661.4 L821.3,662.4 L823.6,661.9 L826.0,662.2 L828.3,662.6 L830.6,662.2 L833.0,660.3 L835.3,660.5 L837.6,660.4 L840.0,660.5 L842.3,660.3 L844.6,660.3 L847.0,659.7 L849.4,659.8 L851.7,659.7 L854.0,660.8 L856.4,661.5 L858.7,661.1 L861.0,661.6 L863.3,661.9 L865.7,662.0 L868.0,662.5 L870.3,662.8 L872.7,662.6 L875.0,662.5 L877.5,662.7 L880.0,662.4 L882.5,662.3 L885.0,662.5 L887.5,662.0 L890.0,661.5 L892.5,661.4 L895.0,661.3 L897.5,660.4 L900.0,661.2 L902.5,661.2 L905.0,661.4 L907.5,661.5 L910.0,661.2 L912.5,661.4 L915.0,661.2 L917.5,661.9 L920.0,661.5 L922.5,661.7 L925.0,662.1 L927.5,662.2 L930.0,662.6 L932.5,662.5 L935.0,662.3 L937.5,662.2 L940.0,662.0 L942.5,662.0 L945.0,661.5 L947.5,662.6 L950.0,662.5 L952.5,662.2 L955.0,662.6 L957.5,662.9 L960.0,663.1 L962.5,662.8 L965.0,663.5 L967.5,663.6 L970.0,663.0 L972.5,663.5 L975.0,663.5 L977.5,664.1 L980.0,664.8 L982.5,664.1 L985.0,664.2 L987.5,662.8 L990.0,662.1 L992.5,662.5 L995.0,662.3 L997.5,662.1 L1000.0,662.8 L1002.5,662.5 L1005.0,662.6 L1007.5,662.7 L1010.0,662.1 L1012.5,661.5 L1015.0,660.7 L1017.5,660.4 L1020.0,660.1 L1022.5,660.7 L1025.0,660.3 L1027.5,660.5 L1030.0,660.0 L1032.5,659.8 L1035.0,660.3 L1037.5,660.2 L1040.0,659.8 L1042.5,659.4 L1045.0,659.1 L1048.8,661.5 L1051.0,660.7 L1053.3,660.7 L1055.6,660.2 L1057.9,659.6 L1060.2,659.3 L1062.5,659.3 L1066.2,658.5 L1070.0,662.2 L1072.5,662.2 L1075.0,661.3 L1077.5,661.6 L1080.0,661.3 L1082.5,661.0 L1085.0,659.4 L1087.5,658.2 L1090.0,657.2 L1092.5,657.0 L1095.0,656.9 L1097.5,657.3 L1100.0,657.4 L1102.5,657.1 L1105.0,656.4 L1107.5,656.3 L1110.0,656.1 L1112.5,655.0 L1115.6,656.9 L1118.8,658.5 L1121.9,657.2 L1125.0,656.0 L1127.2,655.7 L1129.5,655.8 L1129.5,712.0 Z" fill="url(#ag)"/><polyline points="601.1,711.8 605.0,710.6 607.5,710.5 610.1,710.4 612.6,710.2 615.2,710.1 617.8,710.0 620.3,709.9 622.5,694.3 625.0,691.1 627.5,689.6 630.0,686.9 632.3,685.8 634.7,684.0 637.0,682.0 639.3,682.1 641.7,681.3 644.0,681.3 647.0,680.1 649.6,678.4 652.2,677.1 654.8,677.1 657.5,675.9 660.1,675.6 662.7,675.6 665.0,675.4 667.4,674.4 669.7,673.7 672.0,673.7 674.3,672.7 676.7,673.6 679.0,673.0 681.3,672.8 683.6,672.8 686.0,673.0 688.3,673.5 690.6,673.4 693.0,674.4 695.4,673.3 697.7,671.9 700.0,671.9 702.4,671.1 704.7,670.9 707.0,670.9 709.4,671.2 711.7,670.7 714.0,670.2 716.4,670.1 718.7,669.6 721.0,669.0 723.4,669.2 725.7,668.7 728.0,668.0 730.4,668.2 732.7,667.9 735.0,668.1 737.4,667.8 739.7,667.1 742.0,668.5 744.4,668.1 746.7,669.1 749.0,668.7 751.4,667.3 753.7,666.9 756.0,665.7 758.4,667.3 760.7,668.3 763.0,667.7 765.4,667.7 767.7,666.7 770.0,667.5 772.4,667.8 774.7,668.2 777.0,668.5 779.4,667.7 781.7,666.7 784.0,664.8 786.3,663.6 788.6,662.8 791.0,663.3 793.3,663.1 795.7,663.4 798.0,663.1 800.9,661.1 803.8,659.8 806.4,660.5 809.0,660.2 811.7,661.1 814.3,661.1 816.6,661.3 819.0,661.4 821.3,662.4 823.6,661.9 826.0,662.2 828.3,662.6 830.6,662.2 833.0,660.3 835.3,660.5 837.6,660.4 840.0,660.5 842.3,660.3 844.6,660.3 847.0,659.7 849.4,659.8 851.7,659.7 854.0,660.8 856.4,661.5 858.7,661.1 861.0,661.6 863.3,661.9 865.7,662.0 868.0,662.5 870.3,662.8 872.7,662.6 875.0,662.5 877.5,662.7 880.0,662.4 882.5,662.3 885.0,662.5 887.5,662.0 890.0,661.5 892.5,661.4 895.0,661.3 897.5,660.4 900.0,661.2 902.5,661.2 905.0,661.4 907.5,661.5 910.0,661.2 912.5,661.4 915.0,661.2 917.5,661.9 920.0,661.5 922.5,661.7 925.0,662.1 927.5,662.2 930.0,662.6 932.5,662.5 935.0,662.3 937.5,662.2 940.0,662.0 942.5,662.0 945.0,661.5 947.5,662.6 950.0,662.5 952.5,662.2 955.0,662.6 957.5,662.9 960.0,663.1 962.5,662.8 965.0,663.5 967.5,663.6 970.0,663.0 972.5,663.5 975.0,663.5 977.5,664.1 980.0,664.8 982.5,664.1 985.0,664.2 987.5,662.8 990.0,662.1 992.5,662.5 995.0,662.3 997.5,662.1 1000.0,662.8 1002.5,662.5 1005.0,662.6 1007.5,662.7 1010.0,662.1 1012.5,661.5 1015.0,660.7 1017.5,660.4 1020.0,660.1 1022.5,660.7 1025.0,660.3 1027.5,660.5 1030.0,660.0 1032.5,659.8 1035.0,660.3 1037.5,660.2 1040.0,659.8 1042.5,659.4 1045.0,659.1 1048.8,661.5 1051.0,660.7 1053.3,660.7 1055.6,660.2 1057.9,659.6 1060.2,659.3 1062.5,659.3 1066.2,658.5 1070.0,662.2 1072.5,662.2 1075.0,661.3 1077.5,661.6 1080.0,661.3 1082.5,661.0 1085.0,659.4 1087.5,658.2 1090.0,657.2 1092.5,657.0 1095.0,656.9 1097.5,657.3 1100.0,657.4 1102.5,657.1 1105.0,656.4 1107.5,656.3 1110.0,656.1 1112.5,655.0 1115.6,656.9 1118.8,658.5 1121.9,657.2 1125.0,656.0 1127.2,655.7 1129.5,655.8" fill="none" stroke="#1a86f4" stroke-width="1.7" stroke-linejoin="round"/></svg>
<div class="t" style="left:589.70px;top:719.51px;font-size:7.9px;color:#b0b0b0;letter-spacing:-0.2px;">3/6/18</div>
<div class="t" style="left:718.20px;top:719.51px;font-size:7.9px;color:#b0b0b0;letter-spacing:-0.2px;">10/11/18</div>
<div class="t" style="left:851.70px;top:719.51px;font-size:7.9px;color:#b0b0b0;letter-spacing:-0.2px;">5/18/19</div>
<div class="t" style="left:982.50px;top:719.51px;font-size:7.9px;color:#b0b0b0;letter-spacing:-0.2px;">12/23/19</div>
<div style="position:absolute;left:222px;top:772px;width:950px;height:3.8px;background:#fff;border-radius:0 0 4px 0;"></div>
<div style="position:absolute;left:233.3px;top:757.7px;width:315.40000000000003px;height:14.899999999999977px;box-sizing:border-box;background:#fff;border:1px solid #cbcbcb;border-radius:2px;border-top:none;border-radius:0 0 2px 2px;"></div>
<div style="position:absolute;left:560px;top:757.7px;width:596.5999999999999px;height:14.899999999999977px;box-sizing:border-box;background:#fff;border:1px solid #cbcbcb;border-radius:2px;border-top:none;border-radius:0 0 2px 2px;"></div>
<div style="position:absolute;left:1122px;top:726px;width:37.2px;height:37.2px;border-radius:50%;background:#1f2331;box-shadow:0 0 0 1.6px #fff;clip-path:inset(31.9px -4px -4px -4px);"></div>
</body></html>
